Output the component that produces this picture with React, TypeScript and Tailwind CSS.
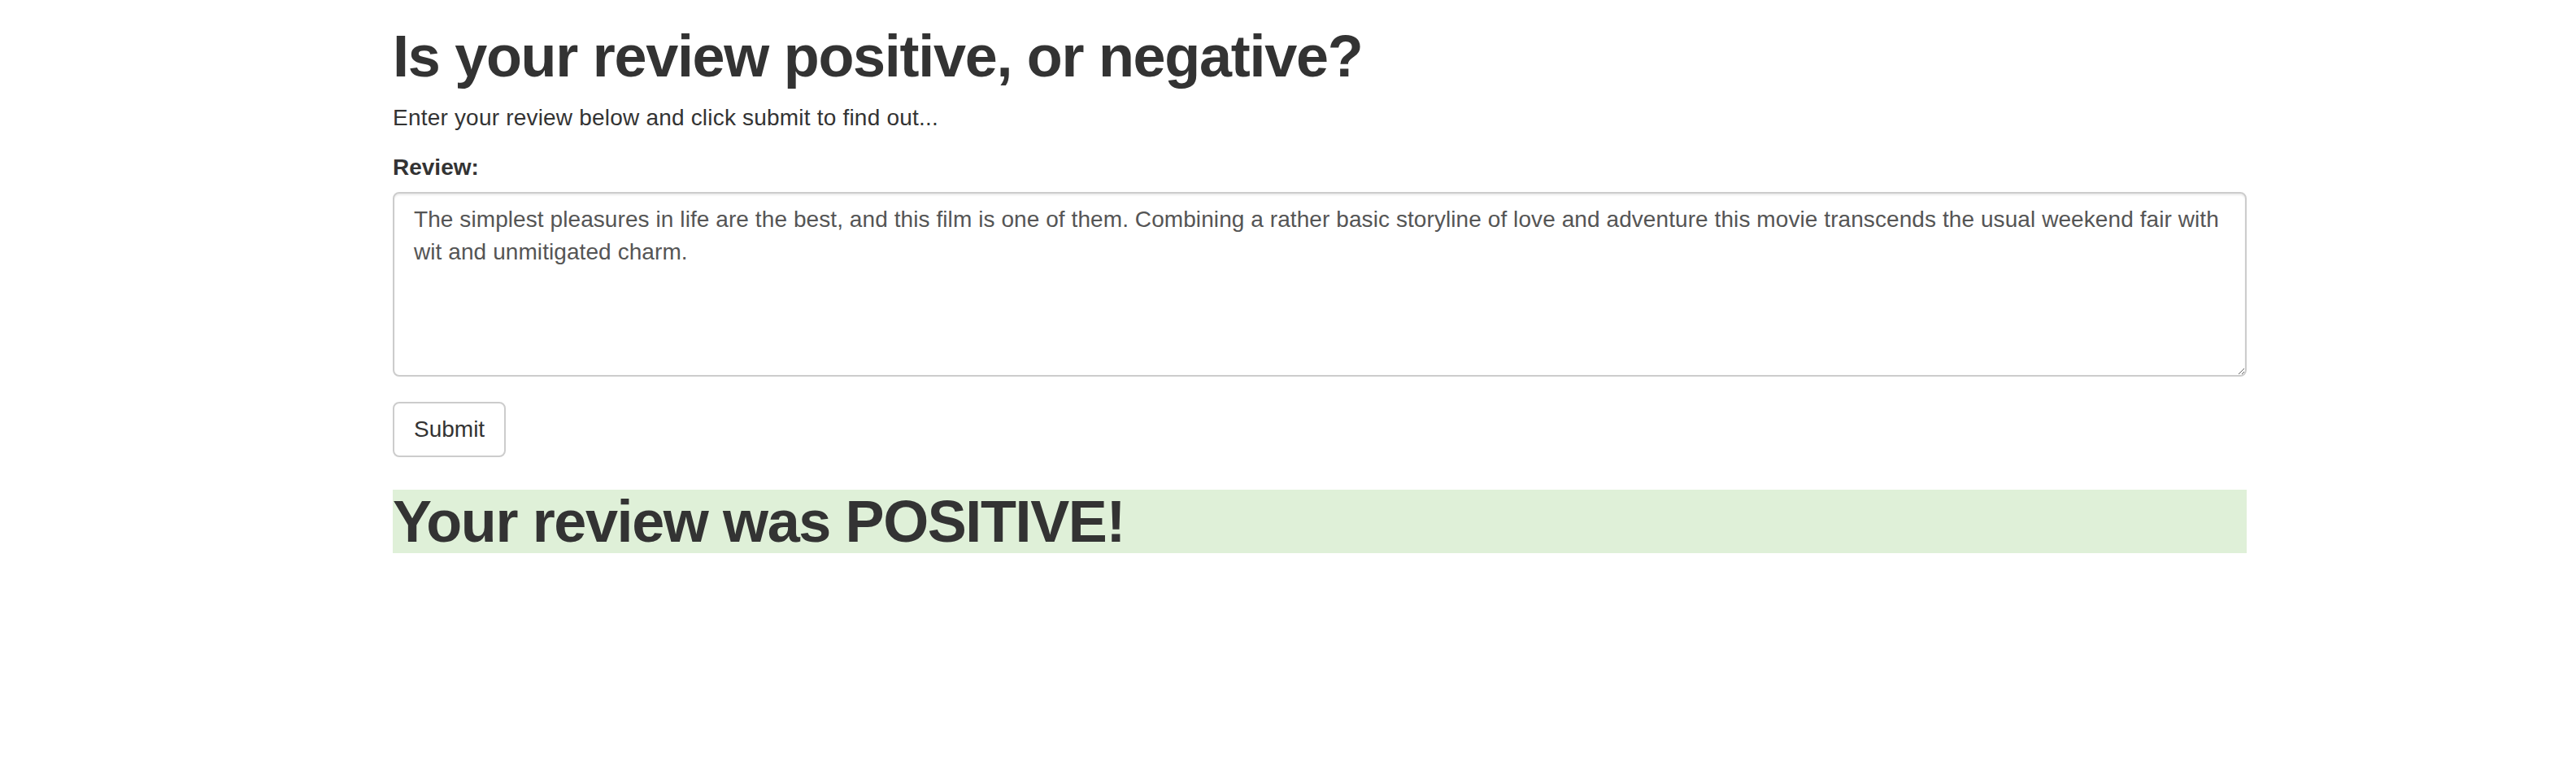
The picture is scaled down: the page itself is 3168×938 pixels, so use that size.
import React, { useState } from 'react';

const review =
  'The simplest pleasures in life are the best, and this film is one of them. Combining a rather basic storyline of love and adventure this movie transcends the usual weekend fair with wit and unmitigated charm.';

const App = () => {
  const [text, setText] = useState(review);

  return (
    <div className="min-h-[938px] w-full bg-white font-['Liberation_Sans',Arial,sans-serif] text-[#333]">
      <div className="ml-[483px] w-[2280px] pt-[30px]">
        <h1 className="mb-[16px] text-[72px] font-bold leading-[79px] tracking-[-1.3px]">
          Is your review positive, or negative?
        </h1>
        <p className="text-[28px] leading-[40px] tracking-[0.2px]">
          Enter your review below and click submit to find out...
        </p>

        <form onSubmit={(e) => e.preventDefault()}>
          <label htmlFor="review" className="mt-[21px] block text-[28px] font-bold leading-[40px]">
            Review:
          </label>
          <textarea
            id="review"
            value={text}
            onChange={(e) => setText(e.target.value)}
            className="mt-[10px] block h-[227px] w-full rounded-[8px] border-2 border-[#ccc] bg-white px-[24px] py-[12px] text-[28px] leading-[40px] tracking-[0.08px] text-[#555] shadow-[inset_0_2px_2px_rgba(0,0,0,0.075)] outline-none"
          />
          <button
            type="submit"
            className="mt-[31px] block h-[68px] rounded-[8px] border-2 border-[#ccc] bg-white px-[24px] text-[28px] leading-[40px] text-[#333]"
          >
            Submit
          </button>
        </form>

        <h1 className="mt-[40px] bg-[#dff0d8] text-[72px] font-bold leading-[78px] tracking-[-1.4px]">
          Your review was POSITIVE!
        </h1>
      </div>
    </div>
  );
};

export default App;
